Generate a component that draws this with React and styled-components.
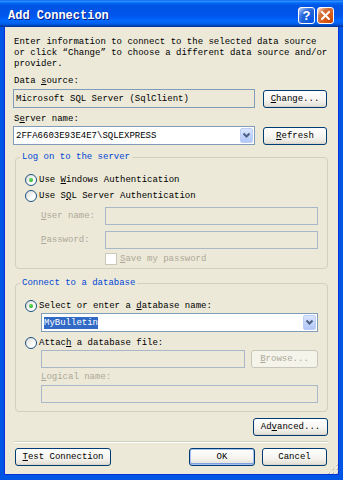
import React from 'react';
import styled, {createGlobalStyle, css} from 'styled-components';

const mono = `"Liberation Mono", "DejaVu Sans Mono", monospace`;
const beige = '#ECE9D8';
const fieldBorder = '#7F9DB9';
const disabledText = '#ACA899';

const GlobalStyle = createGlobalStyle`
    html, body {
        margin: 0;
        padding: 0;
        background: #fff;
    }
    body {
        font-family: ${mono};
        font-size: 9px;
        color: #000;
    }
    #root {
        width: 343px;
        height: 480px;
    }
    u {
        text-decoration: underline;
        text-underline-offset: 1px;
    }
`

const Window = styled.div`
    width: 343px;
    height: 480px;
    display: flex;
    flex-direction: column;
    overflow: hidden;
    background: #0054E3;`

const TitleBar = styled.div`
    flex: 0 0 27px;
    box-sizing: border-box;
    display: flex;
    align-items: center;
    padding: 4px 9px 0 8px;
    background: linear-gradient(to bottom, #0058EE 0%, #3593FF 4%, #288EFF 6%, #127DFF 8%, #036FFC 10%, #0262EE 14%, #0057E5 20%, #0054E3 24%, #0055EB 56%, #005BF5 66%, #026AFE 76%, #0062EF 86%, #0052D6 92%, #0040AB 96%, #003092 100%);`

const Title = styled.div`
    flex: 1;
    color: #fff;
    font: bold 12px ${mono};
    text-shadow: 1px 1px #0A1883;`

const CaptionButtons = styled.div`
    display: flex;
    gap: 2px;`

const CaptionButton = styled.button`
    width: 17px;
    height: 17px;
    box-sizing: border-box;
    padding: 0;
    border: 1px solid #fff;
    border-radius: 3px;
    display: flex;
    align-items: center;
    justify-content: center;
    color: #fff;
    font: bold 13px "Liberation Sans", Arial, sans-serif;
    background: ${p => p.$close
        ? 'radial-gradient(circle at 90% 90%, #CC4600 0%, #DC6527 55%, #CD7546 70%, #FFCCB2 90%, #fff 100%)'
        : 'radial-gradient(circle at 90% 90%, #0054E9 0%, #2263D5 55%, #4479E4 70%, #A3BBEC 90%, #fff 100%)'};`

const Body = styled.div`
    position: relative;
    flex: 1;
    display: flex;
    flex-direction: column;
    background: ${beige};
    border: 4px solid #0055E5;
    border-top: 0;
    border-bottom-width: 5px;
    padding: 10px 11px 0 9px;
    box-shadow: inset 1px 0 #0831D9, inset -1px 0 #0831D9, inset 0 -1px #0831D9;`

const Intro = styled.div`
    padding-left: 1px;
    line-height: 11px;
    white-space: nowrap;`

const Label = styled.div`
    margin-top: ${p => p.$top || 0}px;
    padding-left: ${p => p.$flush ? 0 : 1}px;
    line-height: 12px;
    color: ${p => p.$disabled ? disabledText : '#000'};`

const Row = styled.div`
    display: flex;
    align-items: center;
    margin-top: ${p => p.$top || 0}px;
    margin-left: ${p => p.$indent || 0}px;
    ${p => p.$disabled && css`
        height: 14px;
        color: ${disabledText};
    `}`

const TextBox = styled.input`
    box-sizing: border-box;
    width: ${p => p.$width}px;
    height: ${p => p.$height || 18}px;
    margin: 0;
    padding: 0 2px;
    border: 1px solid ${p => p.disabled ? '#A9B8C8' : fieldBorder};
    background: ${p => p.readOnly || p.disabled ? beige : '#fff'};
    font: 9px ${mono};
    color: #000;
    outline: none;`

const Combo = styled.div`
    box-sizing: border-box;
    width: ${p => p.$width}px;
    height: 19px;
    display: flex;
    align-items: center;
    padding: 1px 1px 1px 2px;
    border: 1px solid ${fieldBorder};
    background: #fff;`

const ComboText = styled.div`
    flex: 1;
    line-height: 12px;
    white-space: nowrap;`

const Selected = styled.span`
    background: #316AC5;
    color: #fff;
    padding: 1px 0;`

const DropArrow = styled.div`
    width: 13px;
    height: 15px;
    box-sizing: border-box;
    display: flex;
    align-items: center;
    justify-content: center;
    border: 1px solid #BCCEF5;
    border-radius: 2px;
    background: linear-gradient(to bottom, #DCE6FD 0%, #C3D4FB 50%, #B3C8F7 100%);`

const Button = styled.button`
    box-sizing: border-box;
    width: ${p => p.$width}px;
    height: 18px;
    margin: 0 0 0 ${p => p.$left || 0}px;
    padding: 0;
    border: 1px solid #003C74;
    border-radius: 3px;
    background: linear-gradient(to bottom, #FFFFFF 0%, #F4F3EE 60%, #E6E3D9 90%, #D6D0C5 100%);
    font: 9px ${mono};
    color: #000;
    ${p => p.$default && css`
        box-shadow: inset 0 0 0 1px #A9C1EE, inset 0 -1px 0 1px #7FA0E3;
    `}
    &:disabled {
        border-color: #C9C7BA;
        background: #F5F4EA;
        color: ${disabledText};
    }`

const Group = styled.fieldset`
    margin: ${p => p.$top}px 0 0 2px;
    padding: 0;
    min-width: 0;
    border: 1px solid #D0D0BF;
    border-radius: 4px;`

const Legend = styled.legend`
    margin-left: 4px;
    padding: 0 2px;
    line-height: 12px;
    color: #0046D5;`

const GroupBody = styled.div`
    padding: 10px 9px ${p => p.$bottom}px 9px;`

const RadioRow = styled.label`
    display: flex;
    align-items: center;
    height: 14px;
    margin-top: ${p => p.$top || 0}px;
    gap: 2px;
    white-space: nowrap;`

const Radio = styled.span`
    position: relative;
    width: 12px;
    height: 12px;
    box-sizing: border-box;
    border: 1px solid #1C5180;
    border-radius: 50%;
    background: linear-gradient(135deg, #DCDCD7 0%, #FFFFFF 70%);
    ${p => p.$checked && css`
        &::after {
            content: '';
            position: absolute;
            left: 3px;
            top: 3px;
            width: 4px;
            height: 4px;
            border-radius: 50%;
            background: radial-gradient(circle at 35% 35%, #5BE15B, #21A121);
        }
    `}`

const Caption = styled.span`
    white-space: pre;`

const FieldLabel = styled.div`
    width: 64px;
    color: ${disabledText};`

const Checkbox = styled.span`
    width: 12px;
    height: 12px;
    box-sizing: border-box;
    border: 1px solid #CAC8BB;
    background: #fff;
    margin-right: 3px;`

const Spacer = styled.div`
    flex: ${p => p.$fixed ? `0 0 ${p.$fixed}px` : 1};`

const Separator = styled.div`
    margin: 5px 0 0 1px;
    border-top: 1px solid #D0D0BF;
    border-bottom: 1px solid #fff;`

const Grip = styled.div`
    position: absolute;
    right: 1px;
    bottom: 1px;
    width: 10px;
    height: 10px;`

const Chevron = () => (
    <svg width="9" height="7" viewBox="0 0 9 7">
        <path d="M1.5 1.5 L4.5 4.5 L7.5 1.5" fill="none" stroke="#4D6185" strokeWidth="2"/>
    </svg>
)

const CloseIcon = () => (
    <svg width="9" height="9" viewBox="0 0 9 9">
        <path d="M1 1 L8 8 M8 1 L1 8" stroke="#fff" strokeWidth="2" strokeLinecap="square"/>
    </svg>
)

const GripDots = () => (
    <svg width="10" height="10" viewBox="0 0 10 10">
        {[[8, 0], [8, 4], [4, 4], [8, 8], [4, 8], [0, 8]].map(([x, y]) => (
            <g key={`${x}-${y}`}>
                <rect x={x} y={y} width="2" height="2" fill="#C6C3B5"/>
                <rect x={x} y={y} width="1" height="1" fill="#fff"/>
            </g>
        ))}
    </svg>
)

export default function App() {
    return (
        <>
            <GlobalStyle/>
            <Window>
                <TitleBar>
                    <Title>Add Connection</Title>
                    <CaptionButtons>
                        <CaptionButton type="button" title="Help">?</CaptionButton>
                        <CaptionButton type="button" title="Close" $close><CloseIcon/></CaptionButton>
                    </CaptionButtons>
                </TitleBar>

                <Body>
                    <Intro>
                        Enter information to connect to the selected data source<br/>
                        or click “Change” to choose a different data source and/or<br/>
                        provider.
                    </Intro>

                    <Label $top={5}>Data <u>s</u>ource:</Label>
                    <Row $top={2}>
                        <TextBox $width={242} $height={19} readOnly value="Microsoft SQL Server (SqlClient)"/>
                        <Button type="button" $width={64} $left={8}><u>C</u>hange...</Button>
                    </Row>

                    <Label $top={5}>S<u>e</u>rver name:</Label>
                    <Row $top={1}>
                        <Combo $width={242}>
                            <ComboText>2FFA6603E93E4E7\SQLEXPRESS</ComboText>
                            <DropArrow><Chevron/></DropArrow>
                        </Combo>
                        <Button type="button" $width={64} $left={8}><u>R</u>efresh</Button>
                    </Row>

                    {/* Log on to the server */}
                    <Group $top={6}>
                        <Legend>Log on to the server</Legend>
                        <GroupBody $bottom={2}>
                            <RadioRow>
                                <Radio $checked/>
                                <Caption>Use <u>W</u>indows Authentication</Caption>
                            </RadioRow>
                            <RadioRow $top={2}>
                                <Radio/>
                                <Caption>Use S<u>Q</u>L Server Authentication</Caption>
                            </RadioRow>
                            <Row $top={4} $indent={16}>
                                <FieldLabel><u>U</u>ser name:</FieldLabel>
                                <TextBox $width={213} disabled/>
                            </Row>
                            <Row $top={6} $indent={16}>
                                <FieldLabel><u>P</u>assword:</FieldLabel>
                                <TextBox $width={213} disabled/>
                            </Row>
                            <Row $top={3} $indent={80} $disabled>
                                <Checkbox/>
                                <Caption><u>S</u>ave my password</Caption>
                            </Row>
                        </GroupBody>
                    </Group>

                    {/* Connect to a database */}
                    <Group $top={8}>
                        <Legend>Connect to a database</Legend>
                        <GroupBody $bottom={8}>
                            <RadioRow>
                                <Radio $checked/>
                                <Caption>Select or enter a <u>d</u>atabase name:</Caption>
                            </RadioRow>
                            <Row $indent={16}>
                                <Combo $width={277}>
                                    <ComboText><Selected>MyBulletin</Selected></ComboText>
                                    <DropArrow><Chevron/></DropArrow>
                                </Combo>
                            </Row>
                            <RadioRow $top={4}>
                                <Radio/>
                                <Caption>Attac<u>h</u> a database file:</Caption>
                            </RadioRow>
                            <Row $indent={16}>
                                <TextBox $width={204} disabled/>
                                <Button type="button" $width={67} $left={6} disabled><u>B</u>rowse...</Button>
                            </Row>
                            <Row $indent={16}>
                                <Label $top={3} $disabled $flush><u>L</u>ogical name:</Label>
                            </Row>
                            <Row $top={2} $indent={16}>
                                <TextBox $width={277} disabled/>
                            </Row>
                        </GroupBody>
                    </Group>

                    <Row $top={6}>
                        <Spacer/>
                        <Button type="button" $width={75}>Ad<u>v</u>anced...</Button>
                    </Row>

                    <Separator/>

                    <Row $top={5}>
                        <Button type="button" $width={96} $left={2}><u>T</u>est Connection</Button>
                        <Spacer/>
                        <Button type="button" $width={66} $default>OK</Button>
                        <Button type="button" $width={65} $left={7}>Cancel</Button>
                        <Spacer $fixed={1}/>
                    </Row>

                    <Grip><GripDots/></Grip>
                </Body>
            </Window>
        </>
    );
};
